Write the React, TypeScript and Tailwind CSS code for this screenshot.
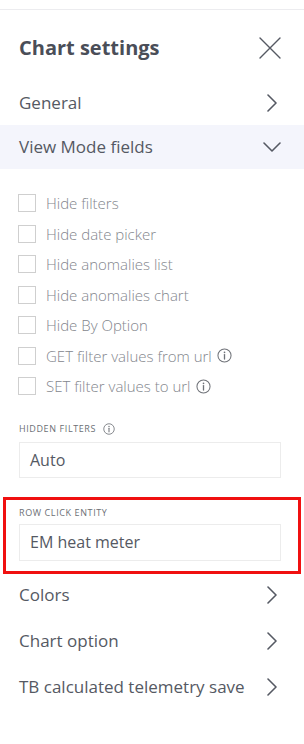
import React from "react";

const font = { fontFamily: '"Open Sans", "Noto Sans", sans-serif' };

function ChevronRight() {
  return (
    <svg width="10" height="18" viewBox="0 0 10 18" fill="none">
      <path d="M1 1 L9 9 L1 17" stroke="#555963" strokeWidth="1.6" strokeLinecap="round" strokeLinejoin="round" />
    </svg>
  );
}

function ChevronDown() {
  return (
    <svg width="18" height="10" viewBox="0 0 18 10" fill="none">
      <path d="M1 1 L9 9 L17 1" stroke="#555963" strokeWidth="1.6" strokeLinecap="round" strokeLinejoin="round" />
    </svg>
  );
}

function CloseIcon() {
  return (
    <svg width="22" height="22" viewBox="0 0 22 22" fill="none">
      <path d="M1 1 L21 21 M21 1 L1 21" stroke="#555963" strokeWidth="1.4" strokeLinecap="round" />
    </svg>
  );
}

function InfoIcon({ size = 15, color = "#707070" }: { size?: number; color?: string }) {
  return (
    <svg width={size} height={size} viewBox="0 0 16 16" fill="none">
      <circle cx="8" cy="8" r="7" stroke={color} strokeWidth="1.1" />
      <circle cx="8" cy="4.6" r="0.9" fill={color} />
      <path d="M8 7 V11.8" stroke={color} strokeWidth="1.4" strokeLinecap="round" />
    </svg>
  );
}

function Row({ label }: { label: string }) {
  return (
    <div className="flex h-[46px] items-center justify-between pb-[4px] pl-[19px] pr-[27px]">
      <span className="text-[17px] text-[#555963]">{label}</span>
      <ChevronRight />
    </div>
  );
}

function Check({ label, info }: { label: string; info?: boolean }) {
  return (
    <div className="flex h-[30.5px] items-center pl-[18px]">
      <div className="h-[18px] w-[18px] border border-[#cfcfcf] bg-white" />
      <span className="ml-[10px] text-[15px] font-light text-[#83868d]">{label}</span>
      {info && (
        <span className="ml-[5px] flex items-center">
          <InfoIcon size={15} color="#6f7278" />
        </span>
      )}
    </div>
  );
}

export default function App() {
  return (
    <div className="h-[744px] w-[304px] overflow-hidden bg-white" style={font}>
      <div className="h-[10px] border-b border-[#ececef]" />
      <div className="flex h-[76px] items-center justify-between pl-[19px] pr-[23px]">
        <span className="text-[20px] font-bold text-[#4a4e58]">Chart settings</span>
        <CloseIcon />
      </div>
      <div className="flex h-[39px] items-center justify-between pb-[6px] pl-[19px] pr-[27px]">
        <span className="text-[17px] text-[#555963]">General</span>
        <ChevronRight />
      </div>
      <div className="flex h-[44px] items-center justify-between bg-[#f4f5fc] pl-[19px] pr-[23px]">
        <span className="text-[17px] text-[#555963]">View Mode fields</span>
        <ChevronDown />
      </div>
      <div className="pt-[19px]">
        <Check label="Hide filters" />
        <Check label="Hide date picker" />
        <Check label="Hide anomalies list" />
        <Check label="Hide anomalies chart" />
        <Check label="Hide By Option" />
        <Check label="GET filter values from url" info />
        <Check label="SET filter values to url" info />
      </div>
      <div className="mt-[21px] px-[19px]">
        <div className="flex h-[12px] items-center">
          <span className="text-[9px] uppercase tracking-[0.6px] text-[#6c6f75]">Hidden filters</span>
          <span className="ml-[7px] flex items-center">
            <InfoIcon size={12} color="#6f7278" />
          </span>
        </div>
        <div className="mt-[7px] flex h-[36px] w-[262px] items-center border border-[#ececec] pl-[10px]">
          <span className="text-[16px] text-[#555963]">Auto</span>
        </div>
      </div>
      <div className="mx-[3px] mt-[19px] border-[3px] border-[#f01010] pb-[10px] pl-[13px] pt-[7px]">
        <div className="flex h-[12px] items-center">
          <span className="text-[9px] uppercase tracking-[0.6px] text-[#6c6f75]">Row click entity</span>
        </div>
        <div className="mt-[5px] flex h-[37px] w-[262px] items-center border border-[#ececec] pl-[10px]">
          <span className="text-[16px] text-[#555963]">EM heat meter</span>
        </div>
      </div>
      <Row label="Colors" />
      <Row label="Chart option" />
      <Row label="TB calculated telemetry save" />
    </div>
  );
}
